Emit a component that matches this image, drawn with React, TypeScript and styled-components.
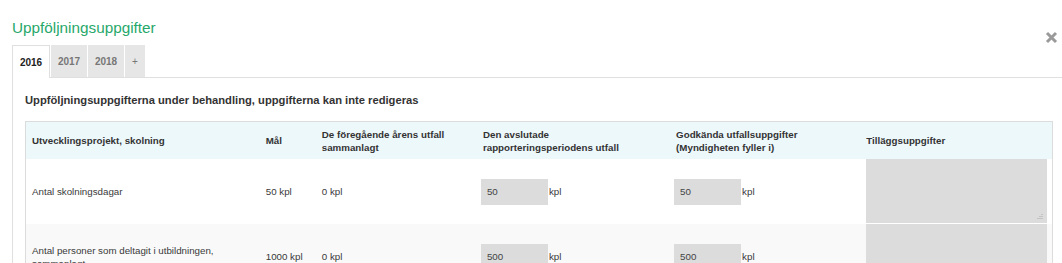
import React from "react";
import styled, { createGlobalStyle } from "styled-components";

const Global = createGlobalStyle`
  html, body { margin: 0; padding: 0; background: #fff; overflow: hidden; }
  body { font-family: "Liberation Sans", Arial, sans-serif; color: #333; }
`;

const Modal = styled.div`
  width: 1062px;
  padding: 19px 0 0 12px;
  box-sizing: border-box;
`;

const Header = styled.div`
  display: flex;
  justify-content: space-between;
  align-items: flex-start;
  height: 18px;
  padding-right: 4px;
`;

const Title = styled.h2`
  margin: 0;
  font-size: 15.3px;
  line-height: 18px;
  font-weight: normal;
  color: #27a86a;
`;

const Close = styled.button`
  margin-top: 12px;
  width: 13px;
  height: 13px;
  padding: 0;
  border: none;
  background: none;
  display: flex;
  cursor: pointer;
`;

const TabBar = styled.div`
  display: flex;
  margin-top: 8px;
  height: 32px;
  border-bottom: 1px solid #dfdfdf;
`;

const Tab = styled.div<{ $active?: boolean }>`
  display: flex;
  align-items: center;
  justify-content: center;
  box-sizing: border-box;
  width: ${(p) => (p.$active ? "38px" : "36px")};
  margin-right: 1px;
  font-size: 10px;
  font-weight: bold;
  color: ${(p) => (p.$active ? "#222" : "#777")};
  background: ${(p) => (p.$active ? "#fff" : "#e6e6e6")};
  border: ${(p) => (p.$active ? "1px solid #dfdfdf" : "none")};
  border-bottom: none;
  height: ${(p) => (p.$active ? "33px" : "32px")};
  margin-bottom: ${(p) => (p.$active ? "-1px" : "0")};
`;

const PlusTab = styled(Tab)`
  width: 20px;
  font-weight: normal;
`;

const Panel = styled.div`
  border-left: 1px solid #dfdfdf;
  padding: 15px 0 0 12px;
  height: 200px;
`;

const Heading = styled.h3`
  margin: 0 0 14px;
  font-size: 11.2px;
  line-height: 14px;
  font-weight: bold;
  color: #333;
`;

const Table = styled.table`
  width: 1028px;
  border-collapse: collapse;
  border: 1px solid #dcdcdc;
  table-layout: fixed;
  font-size: 9.75px;
  line-height: 13px;
  color: #3a3a3a;
`;

const HeadRow = styled.tr`
  background: #edf8fb;
`;

const Th = styled.th`
  height: 37px;
  padding: 0 16px 0 6px;
  text-align: left;
  vertical-align: middle;
  font-weight: bold;
  color: #333;
`;

const Row = styled.tr<{ $shaded?: boolean }>`
  background: ${(p) => (p.$shaded ? "#f9f9f9" : "#fff")};
  & + & td { border-top: 1px solid #dcdcdc; }
`;

const Td = styled.td`
  height: 65px;
  padding: 0 6px;
  vertical-align: middle;
`;

const AreaTd = styled.td`
  height: 65px;
  padding: 0 5px 0 6px;
  vertical-align: top;
`;

const Amount = styled.div`
  display: flex;
  align-items: center;
  margin-left: -2px;
`;

const Field = styled.div`
  width: 61px;
  height: 26px;
  padding-left: 6px;
  display: flex;
  align-items: center;
  background: #dcdcdc;
  color: #444;
  margin-right: 1px;
`;

const Area = styled.div`
  position: relative;
  height: 64px;
  background: #dcdcdc;
`;

const Grip = styled.svg`
  position: absolute;
  right: 4px;
  bottom: 3px;
`;

const cols = [234, 56, 161, 193, 190, 192];

const rows = [
  { name: "Antal skolningsdagar", goal: "50 kpl", prev: "0 kpl", done: "50", ok: "50" },
  {
    name: "Antal personer som deltagit i utbildningen, sammanlagt",
    goal: "1000 kpl",
    prev: "0 kpl",
    done: "500",
    ok: "500",
  },
];

export default function App() {
  return (
    <>
      <Global />
      <Modal>
        <Header>
          <Title>Uppföljningsuppgifter</Title>
          <Close aria-label="Stäng">
            <svg width="13" height="13" viewBox="0 0 13 13">
              <path d="M2 2 L11 11 M11 2 L2 11" stroke="#9a9a9a" strokeWidth="3" />
            </svg>
          </Close>
        </Header>
        <TabBar>
          <Tab $active>2016</Tab>
          <Tab>2017</Tab>
          <Tab>2018</Tab>
          <PlusTab>+</PlusTab>
        </TabBar>
        <Panel>
          <Heading>Uppföljningsuppgifterna under behandling, uppgifterna kan inte redigeras</Heading>
          <Table>
            <colgroup>
              {cols.map((w, i) => (
                <col key={i} style={{ width: w }} />
              ))}
            </colgroup>
            <thead>
              <HeadRow>
                <Th>Utvecklingsprojekt, skolning</Th>
                <Th>Mål</Th>
                <Th>De föregående årens utfall sammanlagt</Th>
                <Th>Den avslutade rapporteringsperiodens utfall</Th>
                <Th>Godkända utfallsuppgifter (Myndigheten fyller i)</Th>
                <Th>Tilläggsuppgifter</Th>
              </HeadRow>
            </thead>
            <tbody>
              {rows.map((r, i) => (
                <Row key={i} $shaded={i % 2 === 1}>
                  <Td>{r.name}</Td>
                  <Td>{r.goal}</Td>
                  <Td>{r.prev}</Td>
                  <Td>
                    <Amount>
                      <Field>{r.done}</Field>kpl
                    </Amount>
                  </Td>
                  <Td>
                    <Amount>
                      <Field>{r.ok}</Field>kpl
                    </Amount>
                  </Td>
                  <AreaTd>
                    <Area>
                      <Grip width="6" height="6" viewBox="0 0 6 6">
                        <path d="M5 0v1M3 2v1M5 2v1M1 4v1M3 4v1M5 4v1" stroke="#aaa" strokeWidth="1" />
                      </Grip>
                    </Area>
                  </AreaTd>
                </Row>
              ))}
            </tbody>
          </Table>
        </Panel>
      </Modal>
    </>
  );
}
